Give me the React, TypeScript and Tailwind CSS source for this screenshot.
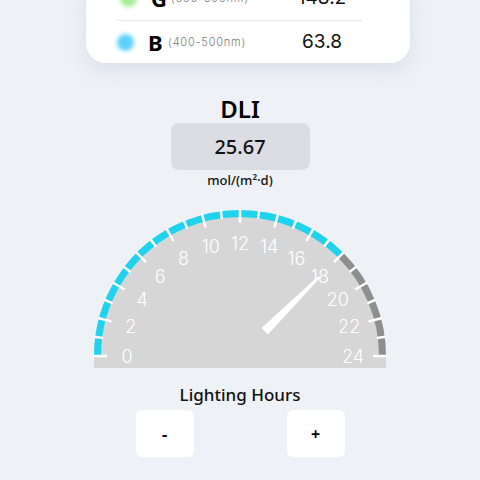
import React from "react";

const CX = 150;
const CY = 151;

function pt(r: number, h: number) {
  const a = Math.PI - (h / 24) * Math.PI;
  return [CX + r * Math.cos(a), CY - r * Math.sin(a)];
}

function arcPath(r: number, h0: number, h1: number) {
  const [x0, y0] = pt(r, h0);
  const [x1, y1] = pt(r, h1);
  return `M ${x0} ${y0} A ${r} ${r} 0 0 1 ${x1} ${y1}`;
}

function Gauge() {
  const hours = Array.from({ length: 25 }, (_, i) => i);
  const value = 18;
  return (
    <svg width="300" height="165" viewBox="0 0 300 165" className="block">
      <path d={`M 4 ${CY} A 146 146 0 0 1 296 ${CY} L 296 163 L 4 163 Z`} fill="#d6d6d6" />
      <path d={arcPath(142.5, 0, value)} stroke="#1fd3ee" strokeWidth="7" fill="none" />
      <path d={arcPath(142.5, value, 24)} stroke="#8e8e8e" strokeWidth="7" fill="none" />
      {hours.map((h) => {
        const len = h % 2 === 0 ? 14 : 9;
        const [x0, y0] = pt(147, h);
        const [x1, y1] = pt(147 - len, h);
        return <line key={h} x1={x0} y1={y0} x2={x1} y2={y1} stroke="#ffffff" strokeWidth="2.5" />;
      })}
      {hours
        .filter((h) => h % 2 === 0)
        .map((h) => {
          const [x, y] = pt(113, h);
          return (
            <text
              key={h}
              x={x}
              y={y}
              textAnchor="middle"
              dominantBaseline="central"
              fill="#ffffff"
              fontSize="18"
              fontWeight="300"
              style={{ fontFamily: "Inter, 'DejaVu Sans', sans-serif" }}
            >
              {h}
            </text>
          );
        })}
      <polygon points="177.9,129.4 171.6,123.1 228.4,70.9 230.1,72.7" fill="#ffffff" />
    </svg>
  );
}

function Row({ dot, letter, range, value }: { dot: string; letter: string; range: string; value: string }) {
  const thin = { fontFamily: "Inter, 'DejaVu Sans', sans-serif" };
  return (
    <div className="w-full flex items-center pl-[31px]">
      <div className={`w-[17px] h-[17px] rounded-full blur-[2px] ${dot}`} />
      <span className="ml-[14px] w-[14px] text-[22px] font-bold leading-none text-black">{letter}</span>
      <span className="ml-[6px] text-[11px] font-light tracking-[0.8px] text-[#7d7d7d]" style={thin}>
        {range}
      </span>
      <span className="ml-auto mr-[48px] w-[80px] text-center text-[19px] text-[#111]" style={thin}>
        {value}
      </span>
    </div>
  );
}

export default function App() {
  const title = { fontFamily: "'Noto Sans', 'DejaVu Sans', sans-serif" };
  return (
    <div className="w-[480px] h-[480px] overflow-hidden bg-[#eef1f6] flex flex-col items-center" style={title}>
      <div className="self-start ml-[86px] w-[324px] -mt-[24px] bg-white rounded-[20px] shadow-[0_6px_18px_rgba(180,188,205,0.35)] flex flex-col">
        <div className="h-[44px] flex items-center">
          <Row dot="bg-[#a3ef93] ml-[3px]" letter="G" range="(500-600nm)" value="148.2" />
        </div>
        <div className="ml-[31px] w-[245px] h-px bg-[#e6e6e6]" />
        <div className="h-[42px] flex items-center">
          <Row dot="bg-[#5cd0ff]" letter="B" range="(400-500nm)" value="63.8" />
        </div>
      </div>

      <div className="mt-[33px] text-[24px] leading-[26px] font-semibold text-black">DLI</div>
      <div className="mt-[1px] w-[139px] h-[47px] rounded-[8px] bg-[#dcdde2] flex items-center justify-center text-[20px] font-medium text-[#111]">
        25.67
      </div>
      <div className="mt-[2px] text-[13px] leading-[16px] font-medium text-[#111]">mol/(m²·d)</div>
      <div className="mt-[17px]">
        <Gauge />
      </div>
      <div className="mt-[14px] text-[17px] leading-[22px] font-medium text-[#111]">Lighting Hours</div>
      <div className="mt-[4px] flex gap-[93px]">
        <button className="w-[58px] h-[47px] rounded-[6px] bg-white flex items-center justify-center text-[16px] font-bold text-black">
          -
        </button>
        <button className="w-[58px] h-[47px] rounded-[6px] bg-white flex items-center justify-center text-[16px] font-bold text-black">
          +
        </button>
      </div>
    </div>
  );
}
